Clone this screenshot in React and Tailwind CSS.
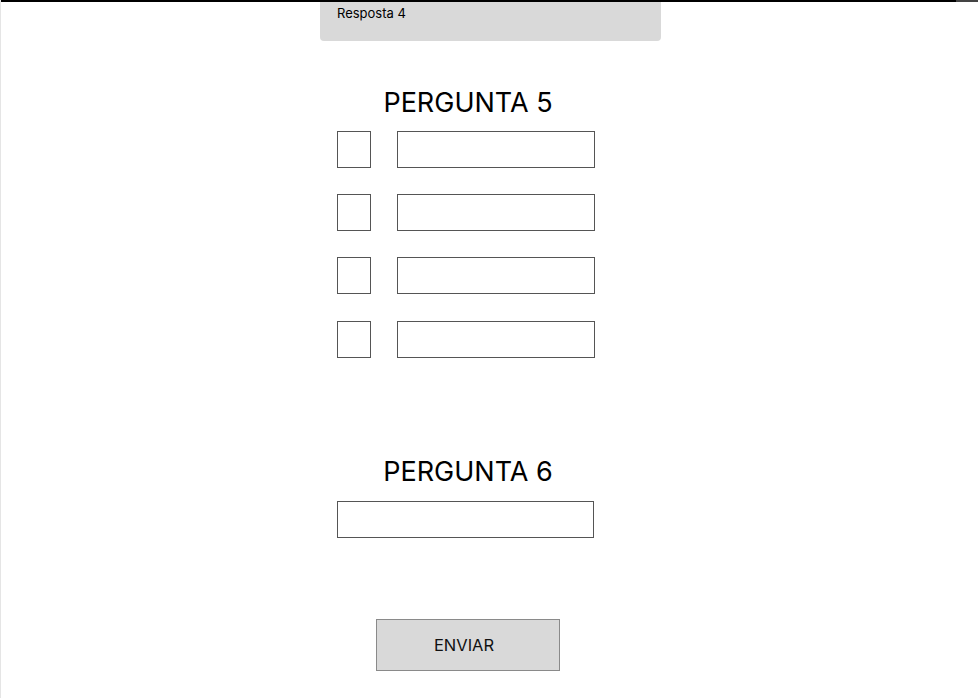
import React from 'react';

function App() {
  const rows = [1, 2, 3, 4];

  return (
    <div className="relative min-h-[698px] w-[978px] bg-white border-l border-[#e5e5e5] font-['Inter','Liberation_Sans',sans-serif] text-black">
      {/* barra superior */}
      <div className="flex h-[2px] w-full">
        <div className="flex-1 bg-black" />
        <div className="w-[22px] bg-[#444]" />
      </div>

      {/* resposta anterior */}
      <div className="ml-[319px] -mt-[2px] h-[41px] w-[341px] rounded-b-[4px] bg-[#d9d9d9] px-[17px] pt-[5px] text-[13px] leading-[16px]">
        Resposta 4
      </div>

      <div className="ml-[336px] flex w-[262px] flex-col">
        <h2 className="mt-[46px] text-center text-[27px] leading-[32px] font-normal">PERGUNTA 5</h2>

        <div className="mt-[12px] flex flex-col">
          {rows.map((r, i) => (
            <div key={r} className={`flex items-center gap-[26px] ${i === 0 ? '' : i === 3 ? 'mt-[27px]' : 'mt-[26px]'}`}>
              <div className="h-[37px] w-[34px] border border-[#555] bg-white" />
              <div className="h-[37px] w-[198px] border border-[#555] bg-white" />
            </div>
          ))}
        </div>

        <h2 className="mt-[98px] text-center text-[27px] leading-[32px] font-normal">PERGUNTA 6</h2>
        <div className="mt-[13px] h-[37px] w-[257px] border border-[#555] bg-white" />

        <button className="mx-auto mt-[81px] h-[52px] w-[184px] border border-[#8a8a8a] bg-[#d9d9d9] pr-[8px] text-[16.5px] text-[#111]">
          ENVIAR
        </button>
      </div>
    </div>
  );
}

export default App;
